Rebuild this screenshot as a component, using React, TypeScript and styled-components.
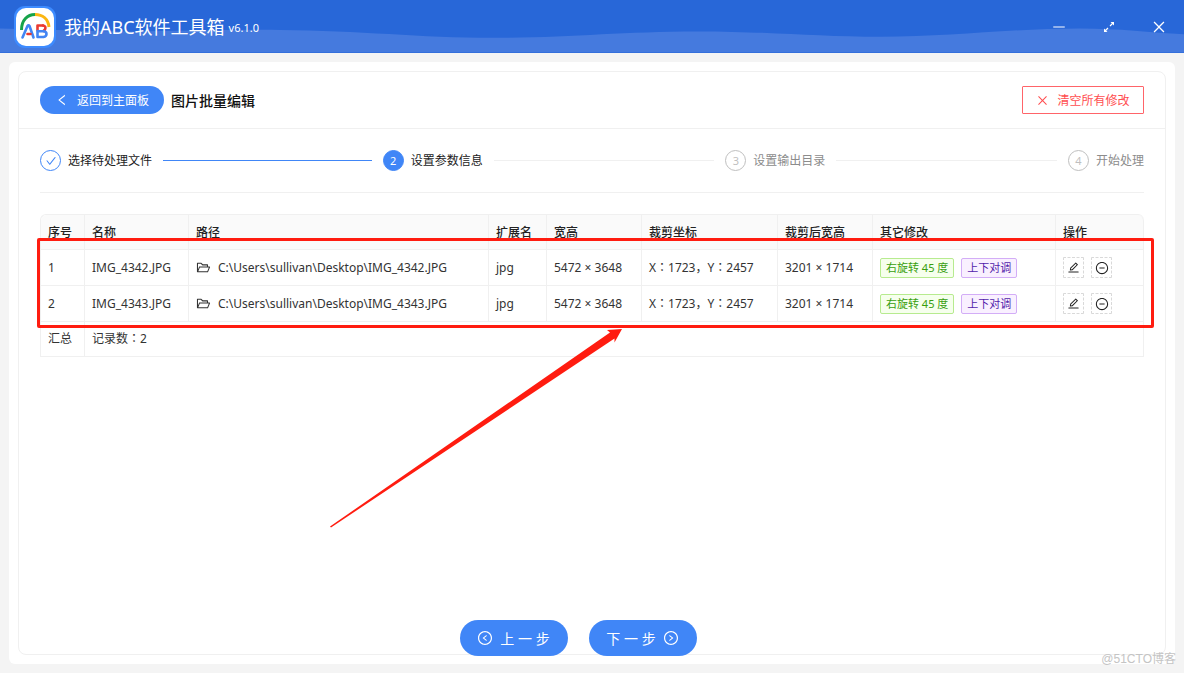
import React from "react";
import styled, { createGlobalStyle, css } from "styled-components";
import {
  AiOutlineCheck,
  AiOutlineClose,
  AiOutlineEdit,
  AiOutlineFolderOpen,
  AiOutlineLeft,
  AiOutlineLeftCircle,
  AiOutlineMinus,
  AiOutlineMinusCircle,
  AiOutlineRightCircle,
} from "react-icons/ai";

const blue = "#4086f7";
const line = "#f0f0f0";
const red = "#ff1c10";

const GlobalStyle = createGlobalStyle`
  * { box-sizing: border-box; }
  body {
    margin: 0;
    background: #f4f4f4;
    color: #333;
    font-family: "Noto Sans", "Noto Sans CJK SC", sans-serif;
    font-size: 12px;
    line-height: 20px;
  }
  button { font-family: inherit; cursor: pointer; padding: 0; }
  svg { display: block; flex: none; }
`;

const Page = styled.div`
  position: relative;
  min-height: 100vh;
  display: flex;
  flex-direction: column;
`;

const TitleBar = styled.header`
  position: relative;
  height: 53px;
  padding: 2px 18px 0 14px;
  display: flex;
  align-items: center;
  background: #2867d8;
  border-bottom: 1px solid #346fdb;
  color: #fff;
`;

const Wave = styled.svg`
  position: absolute;
  inset: 0;
  width: 100%;
  height: 100%;
`;

const Brand = styled.div`
  position: relative;
  flex: 1;
  display: flex;
  align-items: center;
  gap: 8px;
`;

const AppName = styled.h1`
  margin: 0;
  font-size: 18px;
  font-weight: 400;
  line-height: 28px;
`;

const Version = styled.span`
  font-size: 11px;
  margin: 2px 0 0 -4px;
`;

const WindowControls = styled.div`
  position: relative;
  display: flex;
  gap: 36px;
`;

const WindowButton = styled.button`
  width: 14px;
  height: 14px;
  display: grid;
  place-items: center;
  place-content: center;
  border: 0;
  background: none;
  color: #fff;
`;

const Card = styled.main`
  flex: 1;
  display: flex;
  margin: 9px;
  padding: 9px;
  border-radius: 6px;
  background: #fff;
`;

const Panel = styled.section`
  flex: 1;
  min-width: 0;
  display: flex;
  flex-direction: column;
  border: 1px solid ${line};
  border-radius: 8px;
`;

const PanelHead = styled.div`
  display: flex;
  align-items: center;
  justify-content: space-between;
  padding: 14px 21px;
  border-bottom: 1px solid ${line};
`;

const HeadGroup = styled.div`
  display: flex;
  align-items: center;
  gap: 7px;
`;

const PanelTitle = styled.h2`
  margin: 0;
  padding-top: 2px;
  font-size: 14px;
  font-weight: 500;
  line-height: 20px;
  color: #111;
`;

const SmallButton = styled.button<{ $danger?: boolean }>`
  height: 28px;
  display: flex;
  align-items: center;
  justify-content: center;
  gap: 8px;
  padding: 0 12px;
  font-size: 12px;
  ${(p) =>
    p.$danger
      ? css`
          min-width: 122px;
          border: 1px solid #ff6469;
          border-radius: 1px;
          background: #fff;
          color: #ff4d4f;
        `
      : css`
          min-width: 124px;
          border: 0;
          border-radius: 14px;
          background: ${blue};
          color: #fff;
        `}
`;

const PanelBody = styled.div`
  flex: 1;
  display: flex;
  flex-direction: column;
  padding: 0 21px;
`;

const Steps = styled.ol`
  list-style: none;
  margin: 0;
  padding: 21px 0;
  display: flex;
  border-bottom: 1px solid ${line};
`;

type StepState = "done" | "active" | "wait";

const StepItem = styled.li<{ $state: StepState }>`
  display: flex;
  align-items: center;
  gap: 7px;
  white-space: nowrap;
  color: ${(p) => (p.$state === "wait" ? "#8c8c8c" : "#222")};

  &:not(:last-child) {
    flex: 1;
  }
  &:not(:last-child)::after {
    content: "";
    flex: 1;
    height: 1px;
    margin: 0 11px 0 4px;
    background: ${(p) => (p.$state === "done" ? blue : line)};
  }
`;

const StepDot = styled.span<{ $state: StepState }>`
  width: 21px;
  height: 21px;
  display: grid;
  place-items: center;
  border: 1px solid ${(p) => (p.$state === "wait" ? "#bfbfbf" : blue)};
  border-radius: 50%;
  background: ${(p) => (p.$state === "active" ? blue : "#fff")};
  color: ${(p) =>
    p.$state === "active" ? "#fff" : p.$state === "done" ? blue : "#bfbfbf"};
  font-size: 11px;
`;

const TableArea = styled.div`
  position: relative;
  margin-top: 21px;
`;

const Table = styled.table`
  width: 100%;
  table-layout: fixed;
  border-collapse: separate;
  border-spacing: 0;
  border-left: 1px solid ${line};
  border-top: 1px solid ${line};
  border-radius: 6px 6px 0 0;

  th,
  td {
    padding: 0 7px;
    text-align: left;
    white-space: nowrap;
    border-right: 1px solid ${line};
    border-bottom: 1px solid ${line};
  }
  th {
    height: 35px;
    padding-top: 2px;
    background: #fafafa;
    color: #222;
    font-weight: 500;
  }
  td {
    height: 36px;
  }
  tfoot td {
    height: 35px;
  }
  th:first-child {
    border-top-left-radius: 6px;
  }
  th:last-child {
    border-top-right-radius: 6px;
  }
`;

const Col = styled.col<{ $w?: number }>`
  width: ${(p) => (p.$w ? `${p.$w}px` : "auto")};
`;

const Inline = styled.div`
  display: flex;
  align-items: center;
  gap: 7px;
`;

const Punct = styled.span`
  font-family: "Noto Sans", "Noto Sans CJK JP", sans-serif;
`;

const tones = {
  green: css`
    color: #389e0d;
    background: #f6ffed;
    border-color: #b7eb8f;
  `,
  purple: css`
    color: #531dab;
    background: #f9f0ff;
    border-color: #d3adf7;
  `,
};

const Tag = styled.span<{ $tone: keyof typeof tones }>`
  height: 20px;
  padding: 0 5px;
  border: 1px solid;
  border-radius: 2px;
  font-size: 11px;
  line-height: 18px;
  ${(p) => tones[p.$tone]}
`;

const IconButton = styled.button`
  width: 21px;
  height: 21px;
  display: grid;
  place-items: center;
  border: 1px dashed #d9d9d9;
  border-radius: 1px;
  background: #fff;
  color: #222;
`;

const Highlight = styled.div`
  position: absolute;
  top: 24px;
  left: -3px;
  right: -10px;
  height: 90px;
  border: 3px solid ${red};
  border-radius: 2px;
  pointer-events: none;
`;

const Arrow = styled.svg`
  position: absolute;
  top: 114px;
  left: 290px;
  pointer-events: none;
`;

const Pager = styled.nav`
  display: flex;
  justify-content: center;
  gap: 21px;
  margin: auto 0 -2px;
  padding-right: 28px;
`;

const PagerButton = styled.button`
  width: 108px;
  height: 36px;
  display: flex;
  align-items: center;
  justify-content: center;
  gap: 7px;
  border: 0;
  border-radius: 18px;
  background: ${blue};
  color: #fff;
  font-size: 14px;
`;

const Watermark = styled.div`
  position: absolute;
  right: 8px;
  bottom: 4px;
  color: #c4c4c4;
  font-family: "Liberation Sans", "Noto Sans CJK SC", sans-serif;
  font-size: 12px;
`;

const Logo = () => (
  <svg width="42" height="42" viewBox="0 0 42 42" fill="none" strokeLinecap="round" strokeLinejoin="round">
    <rect x="0" y="0" width="42" height="42" rx="11" fill="#3d8bff" />
    <rect x="2" y="2" width="38" height="38" rx="10" fill="#fff" />
    <g strokeWidth="3" strokeLinecap="butt">
      <path d="M7.500 24C7.500 14 13.500 8.500 21 8.500" stroke="#16a34a" />
      <path d="M21 8.500C28.500 8.500 34 13 35 21" stroke="#fbb612" />
    </g>
    <g strokeWidth="2.600">
      <path d="M8.500 31.500L13.500 20Q14.500 18.500 15.500 20L19.500 31.500" stroke="#4285f4" />
      <path d="M13.500 28H16.500" stroke="#ea3a30" />
      <path d="M23.500 24.500V19.500H29" stroke="#ea3a30" />
      <path d="M29 19.500Q32.500 20 31 23.500L29.500 25" stroke="#ea3a30" />
      <path d="M23.500 25V31H29.500Q32.500 30.500 32.500 28Q32.500 25.500 29.500 25.300H24" stroke="#4285f4" />
    </g>
  </svg>
);

const ExpandIcon = () => (
  <svg width="12" height="12" viewBox="0 0 12 12" fill="#fff" stroke="#fff">
    <path d="M7 5L10 2M5 7L2 10" strokeWidth="1.200" fill="none" />
    <path d="M7.500 1H11V4.500ZM1 7.500V11H4.500Z" stroke="none" />
  </svg>
);

const steps: { label: string; state: StepState }[] = [
  { label: "选择待处理文件", state: "done" },
  { label: "设置参数信息", state: "active" },
  { label: "设置输出目录", state: "wait" },
  { label: "开始处理", state: "wait" },
];

const columns: { title: string; width?: number }[] = [
  { title: "序号", width: 44 },
  { title: "名称", width: 104 },
  { title: "路径" },
  { title: "扩展名", width: 58 },
  { title: "宽高", width: 95 },
  { title: "裁剪坐标", width: 136 },
  { title: "裁剪后宽高", width: 95 },
  { title: "其它修改", width: 183 },
  { title: "操作", width: 88 },
];

const files = ["IMG_4342.JPG", "IMG_4343.JPG"];

export default function App() {
  return (
    <Page>
      <GlobalStyle />
      <TitleBar>
        <Wave viewBox="0 0 1184 53" preserveAspectRatio="none" aria-hidden="true">
          <path
            d="M0 29C50 30 80 32 130 32S230 30 280 30.500C360 31 420 38.500 493 38.500C570 38.500 620 32 697 32C770 32 815 37.500 881 37.500C950 37.500 1010 29 1080 29C1120 29 1150 33 1184 35V53H0Z"
            fill="#457ade"
          />
        </Wave>
        <Brand>
          <Logo />
          <AppName>我的ABC软件工具箱</AppName>
          <Version>v6.1.0</Version>
        </Brand>
        <WindowControls>
          <WindowButton aria-label="最小化">
            <AiOutlineMinus size={16} />
          </WindowButton>
          <WindowButton aria-label="最大化">
            <ExpandIcon />
          </WindowButton>
          <WindowButton aria-label="关闭">
            <AiOutlineClose size={16} />
          </WindowButton>
        </WindowControls>
      </TitleBar>

      <Card>
        <Panel>
          <PanelHead>
            <HeadGroup>
              <SmallButton>
                <AiOutlineLeft size={14} />
                返回到主面板
              </SmallButton>
              <PanelTitle>图片批量编辑</PanelTitle>
            </HeadGroup>
            <SmallButton $danger>
              <AiOutlineClose size={13} />
              清空所有修改
            </SmallButton>
          </PanelHead>

          <PanelBody>
            <Steps>
              {steps.map((s, i) => (
                <StepItem key={s.label} $state={s.state}>
                  <StepDot $state={s.state}>
                    {s.state === "done" ? <AiOutlineCheck size={12} /> : i + 1}
                  </StepDot>
                  {s.label}
                </StepItem>
              ))}
            </Steps>

            <TableArea>
              <Table>
                <colgroup>
                  {columns.map((c) => (
                    <Col key={c.title} $w={c.width} />
                  ))}
                </colgroup>
                <thead>
                  <tr>
                    {columns.map((c) => (
                      <th key={c.title} scope="col">
                        {c.title}
                      </th>
                    ))}
                  </tr>
                </thead>
                <tbody>
                  {files.map((name, i) => (
                    <tr key={name}>
                      <td>{i + 1}</td>
                      <td>{name}</td>
                      <td>
                        <Inline>
                          <AiOutlineFolderOpen size={15} />
                          {"C:\\Users\\sullivan\\Desktop\\" + name}
                        </Inline>
                      </td>
                      <td>jpg</td>
                      <td>5472 × 3648</td>
                      <td>
                        <Punct>X：1723，Y：2457</Punct>
                      </td>
                      <td>3201 × 1714</td>
                      <td>
                        <Inline>
                          <Tag $tone="green">右旋转 45 度</Tag>
                          <Tag $tone="purple">上下对调</Tag>
                        </Inline>
                      </td>
                      <td>
                        <Inline>
                          <IconButton aria-label="编辑">
                            <AiOutlineEdit size={13} />
                          </IconButton>
                          <IconButton aria-label="移除">
                            <AiOutlineMinusCircle size={14} />
                          </IconButton>
                        </Inline>
                      </td>
                    </tr>
                  ))}
                </tbody>
                <tfoot>
                  <tr>
                    <td>汇总</td>
                    <td colSpan={8}>
                      记录数<Punct>：</Punct>2
                    </td>
                  </tr>
                </tfoot>
              </Table>
              <Highlight />
              <Arrow width="294" height="202" viewBox="0 0 294 202" aria-hidden="true">
                <path d="M0 198.500L280 4.500L277 2L292 1L284.500 14.500L284.500 10.500L1 199.500Z" fill={red} />
              </Arrow>
            </TableArea>

            <Pager>
              <PagerButton>
                <AiOutlineLeftCircle size={16} />上 一 步
              </PagerButton>
              <PagerButton>
                下 一 步<AiOutlineRightCircle size={16} />
              </PagerButton>
            </Pager>
          </PanelBody>
        </Panel>
      </Card>
      <Watermark>@51CTO博客</Watermark>
    </Page>
  );
}
